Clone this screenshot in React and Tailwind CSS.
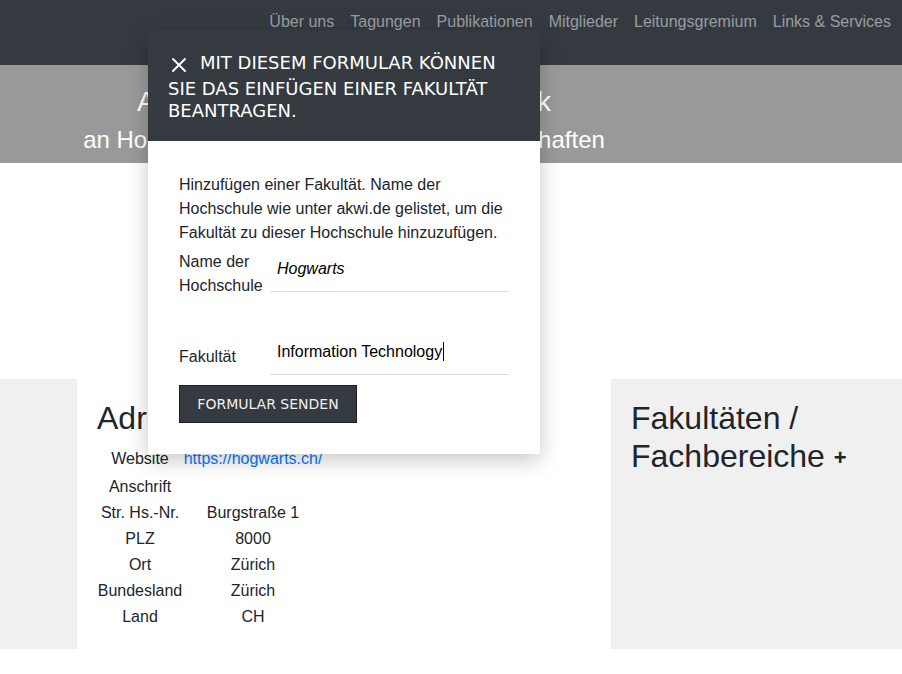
import { X } from 'lucide-react';

const navLinks = ['Über uns', 'Tagungen', 'Publikationen', 'Mitglieder', 'Leitungsgremium', 'Links & Services'];

const rows = [
  ['Anschrift', ''],
  ['Str. Hs.-Nr.', 'Burgstraße 1'],
  ['PLZ', '8000'],
  ['Ort', 'Zürich'],
  ['Bundesland', 'Zürich'],
  ['Land', 'CH'],
];

function Modal() {
  return (
    <div className="absolute left-[148px] top-[30px] w-[392px] bg-white shadow-[0_6px_20px_rgba(0,0,0,0.22)]">
      <div className="bg-[#343a40] pl-5 pr-4 pt-[21px] pb-5 font-['DejaVu_Sans',sans-serif] text-[18px] leading-[1.2] text-white">
        <span className="mr-2 inline-flex h-[27px] w-[24px] items-center justify-center align-[-8px]">
          <X size={24} strokeWidth={2} className="relative -left-[1px] top-[0px]" />
        </span>
        MIT DIESEM FORMULAR KÖNNEN SIE DAS EINFÜGEN EINER FAKULTÄT BEANTRAGEN.
      </div>
      <div className="px-[31px] pt-[32px] pb-[31px] text-[16px] leading-6 text-[#212529]">
        <p>
          Hinzufügen einer Fakultät. Name der Hochschule wie unter akwi.de gelistet, um die Fakultät zu dieser Hochschule
          hinzuzufügen.
        </p>
        <div className="mt-[5px] flex">
          <div className="w-[91px] shrink-0">Name der Hochschule</div>
          <div className="h-[42px] flex-1 border-b border-[#dddddd] pl-[7px] pt-[7px] italic text-black">Hogwarts</div>
        </div>
        <div className="mt-[35px] flex">
          <div className="w-[91px] shrink-0 pt-[12px]">Fakultät</div>
          <div className="h-[42px] flex-1 border-b border-[#dddddd] pl-[7px] pt-[7px] text-black">
            Information Technology
            <span className="ml-[1px] inline-block h-[19px] w-px bg-black align-[-4px]" />
          </div>
        </div>
        <button className="mt-[10px] h-[38px] w-[178px] border border-[#1d2124] bg-[#343a40] font-['DejaVu_Sans',sans-serif] text-[14px] text-[#f0f0f0]">
          FORMULAR SENDEN
        </button>
      </div>
    </div>
  );
}

export default function App() {
  return (
    <div className="relative min-h-[674px] bg-white font-['Liberation_Sans',Arial,sans-serif]">
      <nav className="flex h-[65px] items-start justify-end bg-[#343a40] pr-[3px] pt-[10px]">
        {navLinks.map((l) => (
          <a key={l} className="px-2 text-[16px] leading-6 text-[#9a9da0]">
            {l}
          </a>
        ))}
      </nav>

      <header className="h-[98px] bg-[#999999] text-white">
        <div className="w-[688px] pt-[22px] text-center">
          <div className="text-[28px] leading-[30px]">Arbeitskreis Wirtschaftsinformatik</div>
          <div className="mt-[8px] text-[24px] leading-[30px]">an Hochschulen für Angewandte Wissenschaften</div>
        </div>
      </header>

      <div className="h-[216px]" />

      <div className="flex h-[270px]">
        <div className="w-[77px] bg-[#f0f0f0]" />
        <div className="w-[534px] px-5 pt-5 text-[#212529]">
          <h2 className="text-[32px] leading-[38px]">Adresse</h2>
          <div className="mt-[7px] grid grid-cols-[86px_140px] text-center text-[16px]">
            <div className="leading-[30px]">Website</div>
            <div className="leading-[30px]">
              <a className="text-[#007bff]">https://hogwarts.ch/</a>
            </div>
            {rows.map(([k, v]) => (
              <div key={k} className="contents">
                <div className="leading-[26px]">{k}</div>
                <div className="leading-[26px]">{v}</div>
              </div>
            ))}
          </div>
        </div>
        <div className="flex-1 bg-[#f0f0f0] px-5 pt-5 text-[#212529]">
          <h2 className="text-[32px] leading-[38px]">
            Fakultäten / Fachbereiche <span className="align-[2px] text-[22px] font-bold">+</span>
          </h2>
        </div>
      </div>

      <Modal />
    </div>
  );
}
